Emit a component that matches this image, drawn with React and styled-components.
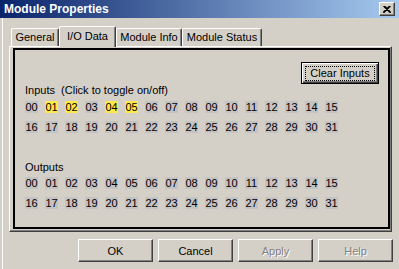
import React from 'react';
import styled, { createGlobalStyle } from 'styled-components';

const GlobalStyle = createGlobalStyle`
  html, body {
    margin: 0;
    padding: 0;
    background: #d4d0c8;
  }
  body {
    font-family: "Liberation Sans", Arial, sans-serif;
    font-size: 11px;
    color: #000;
  }
`;

const Window = styled.div`
  width: 399px;
  height: 269px;
  display: flex;
  flex-direction: column;
  background: #d4d0c8;
  overflow: hidden;
`;

const TitleBar = styled.div`
  height: 18px;
  flex: none;
  display: flex;
  align-items: center;
  justify-content: space-between;
  padding: 0 4px;
  background: linear-gradient(to right, #0a246a, #a6caf0);
  color: #fff;
  font-weight: bold;
  font-size: 12px;
`;

const CloseButton = styled.div`
  width: 16px;
  height: 14px;
  box-sizing: border-box;
  display: flex;
  align-items: center;
  justify-content: center;
  background: #d4d0c8;
  border: 1px solid;
  border-color: #fff #404040 #404040 #fff;
  box-shadow: inset -1px -1px #808080;
`;

const Body = styled.div`
  flex: 1;
  display: flex;
  flex-direction: column;
  margin-left: 2px;
  border-left: 1px solid #fff;
  padding: 0 6px 0 6px;
`;

const TabRow = styled.div`
  display: flex;
  align-items: flex-end;
  height: 20px;
  margin-top: 8px;
  padding-left: 2px;
`;

const Tab = styled.div`
  box-sizing: border-box;
  width: ${(p) => p.$w}px;
  height: ${(p) => (p.$active ? 21 : 18)}px;
  margin-bottom: ${(p) => (p.$active ? -1 : 0)}px;
  position: relative;
  z-index: ${(p) => (p.$active ? 2 : 1)};
  padding-top: ${(p) => (p.$active ? 3 : 2)}px;
  text-align: center;
  line-height: 13px;
  background: #d4d0c8;
  border-top: 1px solid #fff;
  border-left: 1px solid #fff;
  border-right: 1px solid #404040;
  border-radius: 2px 2px 0 0;
  box-shadow: inset -1px 0 #808080;
  white-space: nowrap;
`;

const Panel = styled.div`
  height: 186px;
  box-sizing: border-box;
  display: flex;
  margin-right: 1px;
  border-top: 1px solid #fff;
  border-left: 1px solid #fff;
  border-right: 1px solid #404040;
  border-bottom: 1px solid #404040;
  box-shadow: inset -1px -1px #808080;
  padding: 1px 1px 2px 3px;
`;

const Frame = styled.div`
  flex: 1;
  border: 2px solid #000;
  display: flex;
  flex-direction: column;
  padding: 12px 9px 0 10px;
`;

const TopBar = styled.div`
  display: flex;
  justify-content: flex-end;
`;

const DefaultButton = styled.div`
  position: relative;
  width: 78px;
  height: 22px;
  box-sizing: border-box;
  display: flex;
  align-items: center;
  justify-content: center;
  border: 1px solid #000;
  box-shadow: inset 1px 1px #fff, inset -1px -1px #404040, inset -2px -2px #808080;
  line-height: 13px;
  &::after {
    content: '';
    position: absolute;
    inset: 3px 3px 2px 3px;
    border: 1px dotted #000;
  }
`;

const Label = styled.div`
  line-height: 12px;
  height: 12px;
  margin-top: ${(p) => p.$top}px;
  white-space: pre;
`;

const BitRow = styled.div`
  display: flex;
  gap: 7px;
  margin-top: ${(p) => p.$top}px;
`;

const Bit = styled.span`
  width: 13px;
  height: 12px;
  line-height: 12px;
  text-align: center;
  background: ${(p) => (p.$on ? '#ffe94a' : '#c3c3c3')};
`;

const ButtonRow = styled.div`
  display: flex;
  justify-content: flex-end;
  gap: 5px;
  margin-top: 7px;
`;

const Button = styled.div`
  width: 75px;
  height: 23px;
  box-sizing: border-box;
  display: flex;
  align-items: center;
  justify-content: center;
  border: 1px solid;
  border-color: #fff #404040 #404040 #fff;
  box-shadow: inset -1px -1px #808080;
  color: ${(p) => (p.$disabled ? '#808080' : '#000')};
  text-shadow: ${(p) => (p.$disabled ? '1px 1px 0 #fff' : 'none')};
`;

const pad = (n) => String(n).padStart(2, '0');
const first = Array.from({ length: 16 }, (_, i) => i);
const second = Array.from({ length: 16 }, (_, i) => i + 16);
const activeInputs = [1, 2, 4, 5];

const Bits = ({ list, on = [], top }) => (
  <BitRow $top={top}>
    {list.map((n) => (
      <Bit key={n} $on={on.includes(n)}>{pad(n)}</Bit>
    ))}
  </BitRow>
);

const App = () => {
  return (
    <>
      <GlobalStyle />
      <Window>
        <TitleBar>
          <span>Module Properties</span>
          <CloseButton>
            <svg width="8" height="7" viewBox="0 0 8 7">
              <path d="M0.5 0 L7.5 7 M1.5 0 L8 6.5 M7.5 0 L0.5 7 M6.5 0 L0 6.5" stroke="#000" strokeWidth="1.2" fill="none" />
            </svg>
          </CloseButton>
        </TitleBar>
        <Body>
          <TabRow>
            <Tab $w={48}>General</Tab>
            <Tab $w={57} $active>I/O Data</Tab>
            <Tab $w={66}>Module Info</Tab>
            <Tab $w={80}>Module Status</Tab>
          </TabRow>
          <Panel>
            <Frame>
              <TopBar>
                <DefaultButton>Clear Inputs</DefaultButton>
              </TopBar>
              <Label $top={0}>{'Inputs  (Click to toggle on/off)'}</Label>
              <Bits list={first} on={activeInputs} top={5} />
              <Bits list={second} on={activeInputs} top={8} />
              <Label $top={28}>Outputs</Label>
              <Bits list={first} top={4} />
              <Bits list={second} top={8} />
            </Frame>
          </Panel>
          <ButtonRow>
            <Button>OK</Button>
            <Button>Cancel</Button>
            <Button $disabled>Apply</Button>
            <Button $disabled>Help</Button>
          </ButtonRow>
        </Body>
      </Window>
    </>
  );
};

export default App;
